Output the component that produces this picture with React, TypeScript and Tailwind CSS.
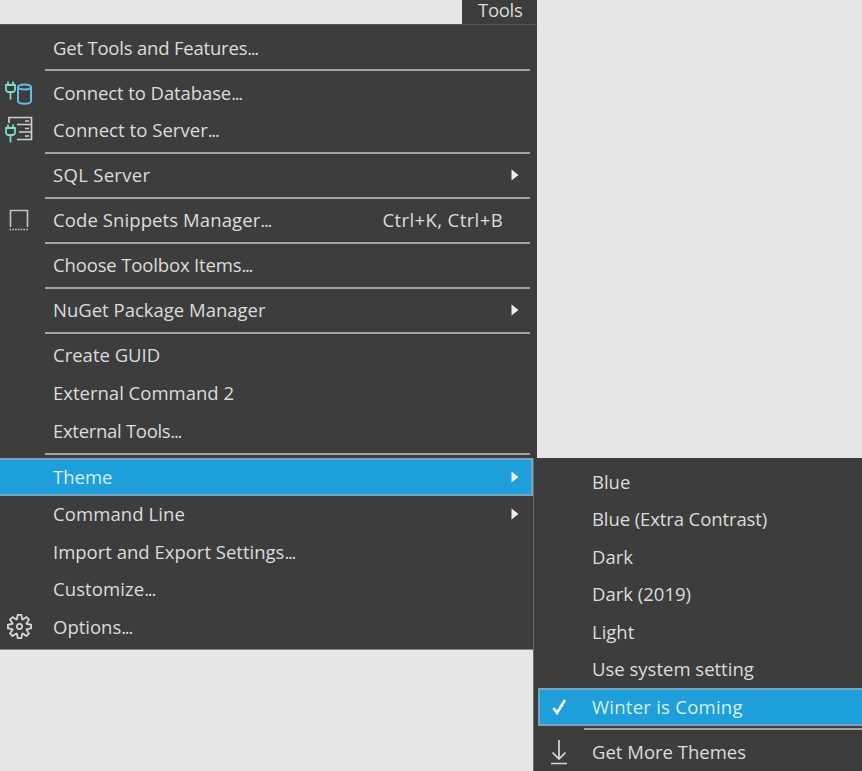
import React from "react";
import { VscSettingsGear } from "react-icons/vsc";

const Plug = ({ x = 0, y = 0 }: { x?: number; y?: number }) => (
  <g transform={`translate(${x} ${y})`} fill="none" stroke="#7fdccb" strokeWidth="1.8">
    <path d="M2.5 0v3.5M7.5 0v3.5M0.5 3.5h9v4.5a2.5 2.5 0 0 1-2.5 2.5h-4A2.5 2.5 0 0 1 0.5 8zM5 10.5V18" />
  </g>
);

const DbIcon = () => (
  <svg width="28" height="26" viewBox="0 0 28 26" fill="none">
    <Plug x={0.5} y={1.5} />
    <path d="M13 7c0-3.5 13-3.5 13 0v14c0 3.5-13 3.5-13 0z M13 7c0 3.2 13 3.2 13 0" stroke="#62bde0" strokeWidth="2" />
  </svg>
);

const ServerIcon = () => (
  <svg width="28" height="28" viewBox="0 0 28 28" fill="none">
    <path d="M4 7V1.5h22.5v22H12M12 8.5h14.5M14 16h12.5M20 5h4M20 12.5h4M20 20h4" stroke="#cfcfcf" strokeWidth="1.7" />
    <Plug x={0.5} y={8.5} />
  </svg>
);

const SnippetIcon = () => (
  <svg width="22" height="24" viewBox="0 0 22 24" fill="none">
    <path d="M2.5 19V2.5h17V19" stroke="#c4c4c4" strokeWidth="1.6" />
    <path d="M1.5 21.5h19" stroke="#c4c4c4" strokeWidth="1.6" strokeDasharray="1.6 1.2" />
  </svg>
);

const DownloadIcon = () => (
  <svg width="18" height="26" viewBox="0 0 18 26" fill="none" stroke="#d8d8d8" strokeWidth="1.7">
    <path d="M9 1v19M2.5 13.5L9 20l6.5-6.5M1 24.5h16" />
  </svg>
);

const CheckIcon = () => (
  <svg width="15" height="16" viewBox="0 0 15 16" fill="none" stroke="#ffffff" strokeWidth="2.6">
    <path d="M1.5 9l3.5 5L13 1" />
  </svg>
);

const Arrow = () => (
  <svg width="8" height="12" viewBox="0 0 8 12" className="shrink-0">
    <path d="M0.5 0.5L7.5 6L0.5 11.5z" fill="#f0f0f0" />
  </svg>
);

const Sep = ({ ml = "ml-[45px]", mr = "mr-[7px]" }: { ml?: string; mr?: string }) => (
  <div className={`h-[7.5px] flex items-center ${ml} ${mr}`}>
    <div className="h-[2px] w-full bg-[#a3a3a3]" />
  </div>
);

const Label = ({ text, className = "" }: { text: string; className?: string }) => {
  const dots = text.endsWith("...");
  return (
    <span className={`whitespace-nowrap ${className}`}>
      {dots ? text.slice(0, -3) : text}
      {dots && <span className="tracking-[-1.3px]">...</span>}
    </span>
  );
};

const Row = ({
  label,
  icon,
  arrow,
  shortcut,
  active,
  pr = "pr-[18px]",
  tracking = "",
  extra = "",
}: {
  label: string;
  icon?: React.ReactNode;
  arrow?: boolean;
  shortcut?: string;
  active?: boolean;
  pr?: string;
  tracking?: string;
  extra?: string;
}) => (
  <div
    className={`flex items-center h-[37.5px] ${pr} ${extra} ${
      active ? "bg-[#1f9fd9] border-y-2 border-r-2 border-[#74a5c0] text-[#d6f0fb]" : "text-[#dcdcdc]"
    }`}
  >
    <div className="w-[53px] shrink-0 flex items-center justify-center pr-[15px]">{icon}</div>
    <Label text={label} className={`flex-1 ${tracking}`} />
    {shortcut && <span className="whitespace-nowrap tracking-[0.4px] mr-[16px]">{shortcut}</span>}
    {arrow && <Arrow />}
  </div>
);

const SubRow = ({
  label,
  icon,
  active,
  tracking = "",
}: {
  label: string;
  icon?: React.ReactNode;
  active?: boolean;
  tracking?: string;
}) => (
  <div
    className={`flex items-center h-[37.5px] ml-[4px] ${
      active ? "bg-[#1f9fd9] border-2 border-r-0 border-[#74a5c0] text-[#d6f0fb]" : "text-[#dcdcdc]"
    }`}
  >
    <div
      className={`${active ? "w-[52px] pr-[14px]" : "w-[54px] pr-[12px]"} shrink-0 flex items-center justify-center`}
    >
      {icon}
    </div>
    <Label text={label} className={tracking} />
  </div>
);

export default function App() {
  return (
    <div className="relative w-[862px] h-[771px] overflow-hidden bg-[#e6e6e6] font-['Open_Sans','Noto_Sans',sans-serif] text-[18.5px] leading-none">
      <div className="w-[537px] h-[24px] flex justify-end">
        <div className="w-[75px] h-full bg-[#3d3d3d] text-[#dcdcdc] pl-[16px] leading-[20px] tracking-[-0.3px]">Tools</div>
      </div>
      <div className="w-[537px] h-[434px] bg-[#3d3d3d] border-t border-[#555555] pt-[4px]">
        <Row label="Get Tools and Features..." tracking="tracking-[-0.2px]" />
        <Sep />
        <Row label="Connect to Database..." icon={<DbIcon />} tracking="tracking-[-0.1px]" />
        <Row label="Connect to Server..." icon={<ServerIcon />} tracking="tracking-[0.05px]" />
        <Sep />
        <Row label="SQL Server" arrow tracking="tracking-[0.3px]" />
        <Sep />
        <Row label="Code Snippets Manager..." icon={<SnippetIcon />} shortcut="Ctrl+K, Ctrl+B" tracking="tracking-[0.1px]" />
        <Sep />
        <Row label="Choose Toolbox Items..." tracking="tracking-[-0.15px]" />
        <Sep />
        <Row label="NuGet Package Manager" arrow tracking="tracking-[0.0px]" />
        <Sep />
        <Row label="Create GUID" />
        <Row label="External Command 2" />
        <Row label="External Tools..." extra="mt-[1px]" tracking="tracking-[-0.3px]" />
        <Sep />
      </div>
      <div className="flex items-start">
        <div className="w-[533px] h-[192px] bg-[#3d3d3d] border-b border-[#8a8a8a]">
          <Row label="Theme" arrow active pr="pr-[12px]" />
          <Row label="Command Line" arrow pr="pr-[14px]" tracking="tracking-[0.1px]" />
          <Row label="Import and Export Settings..." pr="pr-[14px]" />
          <Row label="Customize..." pr="pr-[14px]" tracking="tracking-[0.1px]" />
          <Row label="Options..." pr="pr-[14px]" icon={<VscSettingsGear size={25} color="#d4d4d4" />} />
        </div>
        <div className="w-[329px] h-[313px] bg-[#3d3d3d] border-l border-[#6a6a6a] pt-[5px]">
          <SubRow label="Blue" />
          <SubRow label="Blue (Extra Contrast)" tracking="tracking-[-0.1px]" />
          <SubRow label="Dark" />
          <SubRow label="Dark (2019)" />
          <SubRow label="Light" />
          <SubRow label="Use system setting" />
          <SubRow label="Winter is Coming" active icon={<CheckIcon />} tracking="tracking-[0.25px]" />
          <Sep ml="ml-[50px]" mr="mr-0" />
          <SubRow label="Get More Themes" icon={<DownloadIcon />} />
        </div>
      </div>
    </div>
  );
}
